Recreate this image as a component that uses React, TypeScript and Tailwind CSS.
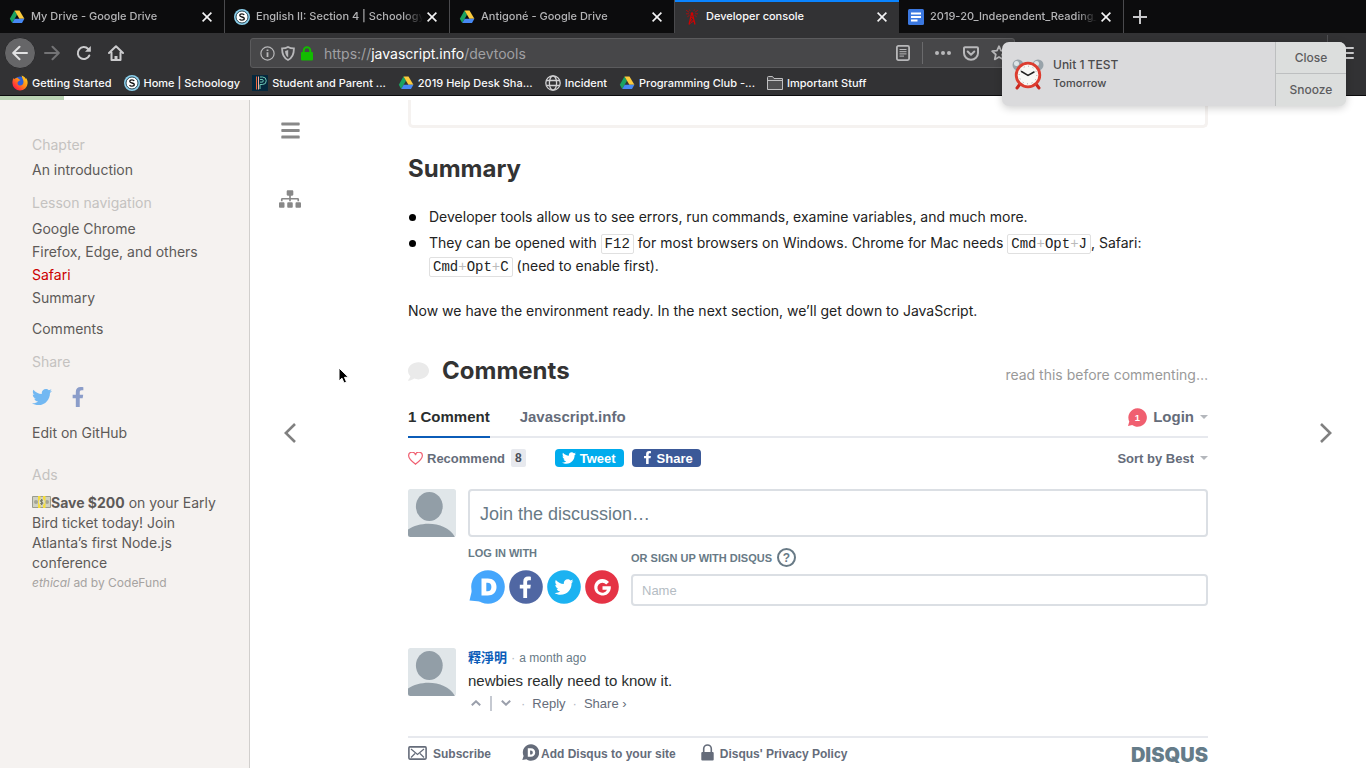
import type { ReactNode } from "react";
import { FaBars, FaComment, FaFacebookF, FaSitemap, FaTwitter } from "react-icons/fa";

function DriveIcon() {
  return (
    <svg width="16" height="16" viewBox="0 0 16 16" className="shrink-0" aria-hidden="true">
      <path d="M5.5 1.5 0.8 9.8 3.2 14 8 5.8Z" fill="#1aa260" />
      <path d="M5.5 1.5h5l4.9 8.3h-5Z" fill="#fccb3c" />
      <path d="M5.7 9.8h9.7L13 14H3.2Z" fill="#4688f4" />
    </svg>
  );
}

function SchoologyIcon() {
  return (
    <svg width="16" height="16" viewBox="0 0 16 16" className="shrink-0" aria-hidden="true">
      <circle cx="8" cy="8" r="8" fill="#8cd0ec" />
      <circle cx="8" cy="8" r="6" fill="#fff" stroke="#16323f" strokeWidth=".9" />
      <path d="M10.200 6.100C9.800 5.200 9 4.800 8 4.800c-1.300 0-2.200.600-2.200 1.600 0 2.200 4.500 1 4.500 3.200 0 1.100-1 1.600-2.300 1.600-1.100 0-2-.400-2.400-1.300" fill="none" stroke="#111" strokeWidth="1.300" />
    </svg>
  );
}

function TowerIcon() {
  return (
    <svg width="14" height="16" viewBox="0 0 14 16" className="shrink-0" fill="none" stroke="#d40000" aria-hidden="true">
      <path d="M6.500 5 4 15.500M7.500 5 10 15.500" strokeWidth="1.200" />
      <path d="M5.600 8.500h2.800L5 12h4M4.200 15 9 12" strokeWidth=".8" />
      <circle cx="7" cy="4.500" r="1.300" fill="#d40000" stroke="none" />
      <path d="M4.200 3.300 1.200 1.300M4 4.800H1M9.800 3.300l3-2M10 4.800h3M5.200 2 4.300.500M8.800 2l.9-1.500M4.500 6.300 2.300 7.800M9.500 6.300l2.200 1.500" strokeWidth=".7" />
    </svg>
  );
}

function DocsIcon() {
  return (
    <svg width="16" height="16" viewBox="0 0 16 16" className="shrink-0" aria-hidden="true">
      <rect width="16" height="16" rx="1.500" fill="#3b78e0" />
      <path d="M3 4.500h10M3 8h10M3 11.500h6.500" stroke="#fff" strokeWidth="1.800" />
    </svg>
  );
}

function FirefoxIcon() {
  return (
    <svg width="16" height="16" viewBox="0 0 16 16" className="shrink-0" aria-hidden="true">
      <defs>
        <linearGradient id="fox" x1="1" y1="0" x2="0" y2="1">
          <stop offset="0" stopColor="#ffe226" />
          <stop offset=".45" stopColor="#ff8a16" />
          <stop offset=".8" stopColor="#ff2a3d" />
          <stop offset="1" stopColor="#e31587" />
        </linearGradient>
      </defs>
      <circle cx="8" cy="7.500" r="6" fill="#2b5fd9" />
      <path d="M1.400 3.200 2.800 4c.7-.9 1.800-1.300 2.800-1.200L7 4.200l1.400.8-1.800 1.200C5 7 5.200 10 7.600 10.400c2.200.4 4-1.200 3.900-3.600C11.400 4.600 10 3.400 9.600.600c2.500 1 3.600 2 4 3.200l.7-.6c1.200 2 1.500 3.800 1.300 5.200A7.600 7.600 0 0 1 8 15.500 7.600 7.600 0 0 1 .4 8c0-1.800.3-3.500 1-4.800Z" fill="url(#fox)" />
    </svg>
  );
}

function PowerSchoolIcon() {
  return (
    <svg width="16" height="16" viewBox="0 0 16 16" className="shrink-0" fill="none" aria-hidden="true">
      <rect width="16" height="16" fill="#06283d" />
      <path d="M4.500 1.500v13" stroke="#f0653a" />
      <path d="M6.500 1.500v13" stroke="#f5b0a0" />
      <path d="M8 2h2.500a3.500 3.500 0 0 1 0 7.500H8V14M8 4.500h2a1.300 1.300 0 0 1 0 2.600H8" stroke="#6cc7b4" />
    </svg>
  );
}

function GlobeIcon() {
  return (
    <svg width="16" height="16" viewBox="0 0 16 16" className="shrink-0" fill="none" stroke="#d0d0d2" strokeWidth="1.300" aria-hidden="true">
      <circle cx="8" cy="8" r="7.200" />
      <ellipse cx="8" cy="8" rx="3.600" ry="7.200" />
      <path d="M1.500 5.500h13M1.500 10.500h13" />
    </svg>
  );
}

function FolderIcon() {
  return (
    <svg width="16" height="14" viewBox="0 0 16 14" className="shrink-0" fill="#4f4f51" stroke="#c0c0c2" aria-hidden="true">
      <path d="M.5 13.500V1.500a1 1 0 0 1 1-1h4l1.500 2h8.500v11ZM.5 4.500h15" />
    </svg>
  );
}

function CloseGlyph() {
  return (
    <svg width="10" height="10" viewBox="0 0 10 10" stroke="#f4f4f5" strokeWidth="1.600" aria-hidden="true">
      <path d="m.6.600 8.800 8.800M9.400.600.600 9.400" />
    </svg>
  );
}

type TabProps = { icon: ReactNode; title: string; active?: boolean };

function BrowserTab({ icon, title, active = false }: TabProps) {
  return (
    <div
      className={
        active
          ? "flex h-full max-w-[224px] flex-1 items-center border-t-2 border-[#0a84ff] bg-[#323234] pr-3 pb-[2px] pl-[10px] text-[#f9f9fa]"
          : "flex h-full max-w-[225px] flex-1 items-center border-r border-[#4a4a4d] pr-3 pl-[9px] text-[#b4b4b6]"
      }
    >
      {icon}
      <span className={active ? "ml-[7px] min-w-0 flex-1 overflow-hidden whitespace-nowrap" : "ml-[6px] min-w-0 flex-1 overflow-hidden whitespace-nowrap [mask-image:linear-gradient(to_right,black_88%,transparent)]"}>
        {title}
      </span>
      <button type="button" aria-label={`Close ${title}`} className="ml-1">
        <CloseGlyph />
      </button>
    </div>
  );
}

function Bookmark({ icon, label }: { icon: ReactNode; label: string }) {
  return (
    <a href="#" className="flex items-center gap-1 whitespace-nowrap">
      {icon}
      {label}
    </a>
  );
}

function BrowserChrome() {
  return (
    <header className="border-b border-[#0b0b0d] bg-[#323234] font-['Inter',sans-serif]">
      <div className="flex h-[33px] bg-[#0c0c0d] text-[11px] font-medium">
        <BrowserTab icon={<DriveIcon />} title="My Drive - Google Drive" />
        <BrowserTab icon={<SchoologyIcon />} title="English II: Section 4 | Schoology" />
        <BrowserTab icon={<DriveIcon />} title="Antigoné - Google Drive" />
        <BrowserTab icon={<TowerIcon />} title="Developer console" active />
        <BrowserTab icon={<DocsIcon />} title="2019-20_Independent_Reading_" />
        <button type="button" aria-label="New tab" className="flex w-8 items-center justify-center">
          <svg width="14" height="14" viewBox="0 0 14 14" stroke="#c8c8ca" strokeWidth="2" aria-hidden="true">
            <path d="M7 0v14M0 7h14" />
          </svg>
        </button>
      </div>
      <div className="flex h-10 items-center pl-1">
        <button type="button" aria-label="Back" className="flex size-8 items-center justify-center rounded-full border border-[#2a2a2c] bg-[#666668]">
          <svg width="16" height="16" viewBox="0 0 16 16" fill="none" stroke="#e2e2e3" strokeWidth="2" strokeLinecap="round" strokeLinejoin="round" aria-hidden="true">
            <path d="M15 8H1.500M7.500 1.800 1.200 8l6.300 6.200" />
          </svg>
        </button>
        <button type="button" aria-label="Forward" className="flex size-8 items-center justify-center">
          <svg width="16" height="16" viewBox="0 0 16 16" fill="none" stroke="#737375" strokeWidth="2" strokeLinecap="round" strokeLinejoin="round" aria-hidden="true">
            <path d="M1 8h13.500M8.500 1.800 14.800 8l-6.300 6.200" />
          </svg>
        </button>
        <button type="button" aria-label="Reload" className="flex size-8 items-center justify-center">
          <svg width="16" height="16" viewBox="0 0 16 16" fill="none" stroke="#cbcbcd" strokeWidth="2" strokeLinecap="round" aria-hidden="true">
            <path d="M13.300 10.500A6 6 0 1 1 12.200 4" />
            <path d="M14.800 1v5.800H9Z" fill="#cbcbcd" stroke="none" />
          </svg>
        </button>
        <button type="button" aria-label="Home" className="flex size-8 items-center justify-center">
          <svg width="16" height="16" viewBox="0 0 16 16" fill="none" stroke="#cbcbcd" strokeWidth="2" strokeLinecap="round" strokeLinejoin="round" aria-hidden="true">
            <path d="M1 8 8 1.200 15 8M3.500 7.500V15h9V7.500" />
            <path d="M8 15v-4" strokeLinecap="butt" strokeWidth="3" />
          </svg>
        </button>
        <div className="ml-[118px] flex h-[30px] min-w-0 flex-1 items-center rounded-[3px] border border-[#5b5b5d] bg-[#474749] pr-[7px] pl-[9px]">
          <div className="flex items-center gap-[6px]">
            <svg width="15" height="15" viewBox="0 0 15 15" fill="none" stroke="#b8b8ba" strokeWidth="1.200" aria-hidden="true">
              <circle cx="7.500" cy="7.500" r="6.600" />
              <path d="M7.500 6.300V11M7.500 3.400v1.700" strokeWidth="1.800" />
            </svg>
            <svg width="14" height="15" viewBox="0 0 14 15" fill="none" stroke="#b8b8ba" strokeWidth="1.800" aria-hidden="true">
              <path d="M7 .9C5.200 2 3.300 2.400 1.100 2.400 1 8 2.300 12 7 14c4.700-2 6-6 5.900-11.600C10.700 2.400 8.800 2 7 .9Z" />
              <path d="M7.200 4v7.300C4.800 9.800 4.200 7.500 4.100 4.900 5.200 4.800 6.200 4.500 7.200 4Z" fill="#b8b8ba" stroke="none" />
            </svg>
            <svg width="12" height="15" viewBox="0 0 12 15" aria-hidden="true">
              <rect y="6" width="12" height="8.500" rx="1" fill="#12bc00" />
              <path d="M2.700 7V4.500a3.300 3.300 0 0 1 6.600 0V7" fill="none" stroke="#12bc00" strokeWidth="2" />
            </svg>
          </div>
          <p className="ml-[11px] flex-1 truncate text-[14px] text-[#a0a0a3]">
            https://<span className="text-white">javascript.info</span>/devtools
          </p>
          <div className="flex items-center text-[#b8b8ba]">
            <svg width="14" height="16" viewBox="0 0 14 16" fill="none" stroke="currentColor" strokeWidth="1.800" aria-hidden="true">
              <rect x=".9" y=".9" width="12.200" height="14.200" rx="1.500" />
              <path d="M3.500 4.500h7M3.500 6.700h7M3.500 8.900h7M3.500 11.100h4.500" strokeWidth="1" />
            </svg>
            <span className="mx-3 h-[22px] w-px bg-[#6a6a6c]" />
            <svg width="16" height="4" viewBox="0 0 16 4" fill="currentColor" aria-hidden="true">
              <circle cx="2" cy="2" r="2" />
              <circle cx="8" cy="2" r="2" />
              <circle cx="14" cy="2" r="2" />
            </svg>
            <svg width="16" height="15" viewBox="0 0 16 15" fill="none" stroke="currentColor" strokeWidth="2" className="ml-3" aria-hidden="true">
              <path d="M2 1.200h12a1 1 0 0 1 1 1V7a7 6.800 0 0 1-14 0V2.200a1 1 0 0 1 1-1Z" />
              <path d="m4.700 5.500 3.300 3.200 3.300-3.200" strokeLinecap="round" strokeLinejoin="round" />
            </svg>
            <svg width="16" height="16" viewBox="0 0 16 16" fill="none" stroke="currentColor" strokeWidth="1.700" strokeLinejoin="round" className="ml-3" aria-hidden="true">
              <path d="m8 1.200 2 4.500 4.900.5-3.700 3.300 1.100 4.900L8 11.900l-4.300 2.500 1.100-4.900L1.100 6.200 6 5.700Z" />
            </svg>
          </div>
        </div>
        <div className="flex h-full w-[351px] items-center justify-end pr-3">
          <span className="mb-1 h-8 w-px bg-[#4f4f52]" />
          <button type="button" aria-label="Menu" className="ml-3">
            <svg width="14" height="14" viewBox="0 0 14 14" stroke="#cbcbcd" strokeWidth="2" strokeLinecap="round" aria-hidden="true">
              <path d="M1 2h12M1 7h12M1 12h12" />
            </svg>
          </button>
        </div>
      </div>
      <nav aria-label="Bookmarks" className="flex h-[22px] items-center gap-3 pb-[2px] pl-3 text-[11px] font-medium text-[#f9f9fa]">
        <Bookmark icon={<FirefoxIcon />} label="Getting Started" />
        <Bookmark icon={<SchoologyIcon />} label="Home | Schoology" />
        <Bookmark icon={<PowerSchoolIcon />} label="Student and Parent ..." />
        <Bookmark icon={<DriveIcon />} label="2019 Help Desk Sha..." />
        <Bookmark icon={<GlobeIcon />} label="Incident" />
        <Bookmark icon={<DriveIcon />} label="Programming Club -..." />
        <Bookmark icon={<FolderIcon />} label="Important Stuff" />
      </nav>
    </header>
  );
}

function MoneyIcon() {
  return (
    <svg width="19" height="12" viewBox="0 0 19 12" className="inline-block align-baseline" aria-hidden="true">
      <rect width="19" height="12" rx="1" fill="#9a9c8f" />
      <rect x="1" y="1" width="17" height="10" fill="#cfd1c4" />
      <circle cx="4" cy="6" r="2" fill="#a3a596" />
      <circle cx="15" cy="6" r="2" fill="#a3a596" />
      <rect x="6" width="2.500" height="12" fill="#f4dc3e" />
      <rect x="11" width="2.500" height="12" fill="#f4dc3e" />
      <circle cx="9.700" cy="6" r="3" fill="#dfe0ca" />
      <path d="M11 4.500c-1-.9-2.700-.6-2.700.4 0 1.400 2.700.8 2.700 2.200 0 1.100-1.900 1.300-2.900.3M9.700 3v6" fill="none" stroke="#5b5e4d" strokeWidth=".8" />
    </svg>
  );
}

function Sidebar() {
  return (
    <aside className="w-[250px] shrink-0 border-r border-[#d1cfcd] bg-[#f5f2f0] px-8 pt-[35px] text-[14px] leading-5 text-[#5d5a58]">
      <h4 className="text-[#c4c2c0]">Chapter</h4>
      <a href="#" className="mt-[5px] block">An introduction</a>
      <h4 className="mt-[13px] text-[#c4c2c0]">Lesson navigation</h4>
      <ul className="mt-1 leading-[23px] whitespace-nowrap">
        <li><a href="#">Google Chrome</a></li>
        <li><a href="#">Firefox, Edge, and others</a></li>
        <li><a href="#" className="text-[#c00]">Safari</a></li>
        <li><a href="#">Summary</a></li>
      </ul>
      <a href="#" className="mt-[10px] block">Comments</a>
      <h4 className="mt-[13px] text-[#c4c2c0]">Share</h4>
      <div className="mt-4 flex h-[18px] items-center gap-4">
        <a href="#" aria-label="Share on Twitter"><FaTwitter size={20} color="#72b8f2" /></a>
        <a href="#" aria-label="Share on Facebook"><FaFacebookF size={20} color="#8b9dc9" /></a>
      </div>
      <a href="#" className="mt-[17px] block">Edit on GitHub</a>
      <h4 className="mt-[22px] text-[#c4c2c0]">Ads</h4>
      <a href="#" className="mt-2 block whitespace-nowrap">
        <MoneyIcon /><strong className="font-bold">Save $200</strong> on your Early
        <br />Bird ticket today! Join
        <br />Atlanta’s first Node.js
        <br />conference
      </a>
      <a href="#" className="block text-[12px] text-[#a5a3a1]"><em>ethical</em> ad by CodeFund</a>
    </aside>
  );
}

function Keys({ keys }: { keys: string[] }) {
  return (
    <kbd className="rounded-[2px] border border-[#e0e0e0] px-[3px] py-px font-['Liberation_Mono',monospace] text-[14px] leading-4 whitespace-nowrap">
      {keys.map((key, i) => (
        <span key={key}>
          {i > 0 && <span className="text-[#bbb]">+</span>}
          {key}
        </span>
      ))}
    </kbd>
  );
}

function Avatar({ id }: { id: string }) {
  return (
    <svg width="48" height="48" viewBox="0 0 48 48" className="shrink-0" role="img" aria-label="Avatar">
      <clipPath id={id}><rect width="48" height="48" rx="2.500" /></clipPath>
      <g clipPath={`url(#${id})`}>
        <rect width="48" height="48" fill="#e0e6e9" />
        <g fill="#929ea7">
          <ellipse cx="21.300" cy="17.500" rx="13.400" ry="14.500" />
          <path d="M0 40.500C13 31.500 38 32 47 48H0Z" />
        </g>
      </g>
    </svg>
  );
}

function Caret() {
  return (
    <svg width="8" height="4" viewBox="0 0 8 4" fill="#b4b7bc" className="shrink-0" aria-hidden="true">
      <path d="M0 0h8L4 4Z" />
    </svg>
  );
}

function LoginCircle({ label, fill, children }: { label: string; fill: string; children: ReactNode }) {
  return (
    <button type="button" aria-label={label} className="size-[34px]">
      <svg width="34" height="34" viewBox="0 0 34 34" overflow="visible" aria-hidden="true">
        <circle cx="17" cy="17" r="16.800" fill={fill} />
        {children}
      </svg>
    </button>
  );
}

function Disqus() {
  return (
    <section aria-label="Discussion" className="font-['Liberation_Sans',sans-serif] text-[#656c7a]">
      <div className="flex h-[51px] items-end justify-between border-b-2 border-[#e7e9ee] text-[15px] leading-5 font-bold">
        <div className="-mb-[2px] flex gap-[30px]">
          <a href="#" className="border-b-2 border-[#0b5cb8] pb-[9px] text-[#2a2e2e]">1 Comment</a>
          <a href="#" className="pb-[11px]">Javascript.info</a>
        </div>
        <button type="button" className="flex items-center pb-[9px]">
          <svg width="19" height="19" viewBox="0 0 19 19" className="mr-[6px]" aria-hidden="true">
            <path d="M9.500.200a9.300 9.300 0 1 1-5.300 16.900L0 17.900l1.300-4.300A9.300 9.300 0 0 1 9.500.200Z" fill="#f05f70" />
            <text x="9.500" y="13" textAnchor="middle" fontSize="9.500" fill="#fff">1</text>
          </svg>
          <span className="mr-[6px]">Login</span>
          <Caret />
        </button>
      </div>

      <div className="mt-[10px] flex h-5 items-center text-[13px] font-bold">
        <button type="button" className="flex items-center">
          <svg width="15" height="13" viewBox="0 0 15 13" fill="none" stroke="#f05f70" strokeWidth="1.200" className="mr-1" aria-hidden="true">
            <path d="M7.500 12.200C4 9.500.7 7 .7 4A3.400 3.400 0 0 1 7.500 3.100 3.400 3.400 0 0 1 14.300 4c0 3-3.300 5.500-6.800 8.200Z" />
          </svg>
          Recommend
          <span className="ml-[6px] rounded-[2px] bg-[#e7e9ee] px-1 text-[12px] leading-[18px] text-[#494e58]">8</span>
        </button>
        <button type="button" className="ml-[29px] flex h-[18px] items-center rounded-[4px] bg-[#00aced] pr-2 pl-[7px] text-white">
          <FaTwitter size={14} className="mr-1 mb-px" />Tweet
        </button>
        <button type="button" className="ml-2 flex h-[18px] items-center rounded-[4px] bg-[#3b5998] pr-2 pl-[9px] text-white">
          <FaFacebookF size={13} className="mr-[3px] mb-px" />Share
        </button>
        <label className="ml-auto flex items-center gap-[6px]">
          <select aria-label="Sort comments" className="appearance-none bg-transparent [field-sizing:content]">
            <option>Sort by Best</option>
          </select>
          <Caret />
        </label>
      </div>

      <div className="mt-[21px] flex gap-3">
        <Avatar id="self-avatar" />
        <div className="min-w-0 flex-1">
          <textarea
            aria-label="Join the discussion"
            placeholder="Join the discussion…"
            rows={1}
            className="block h-12 w-full resize-none rounded-[4px] border-2 border-[#dbdfe4] bg-white px-[10px] pt-[11px] pb-[9px] text-[18px] leading-6 placeholder:text-[#687a86]"
          />
          <div className="flex text-[11px] leading-4 font-bold text-[#687a86]">
            <div className="w-[163px] pt-2">
              <p>LOG IN WITH</p>
              <div className="mt-[9px] flex gap-1 pl-[3px]">
                <LoginCircle label="Log in with Disqus" fill="#45a6fc">
                  <path d="M1 20-1.500 30.500 9 31.500Z" fill="#45a6fc" />
                  <path fillRule="evenodd" d="M10.500 8.500h6.300c5.300 0 8.700 3.100 8.700 8.500s-3.500 8.500-8.800 8.500h-6.200Zm4.800 4.300v8.400h1.300c2.400 0 3.800-1.400 3.800-4.200s-1.400-4.200-3.800-4.200Z" fill="#fff" />
                </LoginCircle>
                <LoginCircle label="Log in with Facebook" fill="#5067a3">
                  <path d="M14.300 28V18.600h-3.500v-3.900h3.500v-3.300c0-3.300 2-4.800 4.700-4.800 1.400 0 2.500.100 2.900.2v3.500h-2c-1.500 0-1.800.8-1.800 1.900v2.500h3.700l-.5 3.900h-3.200V28Z" fill="#fff" />
                </LoginCircle>
                <LoginCircle label="Log in with Twitter" fill="#1cb2f1">
                  <g transform="translate(7.500 7.500)"><FaTwitter size={19} color="#fff" /></g>
                </LoginCircle>
                <LoginCircle label="Log in with Google" fill="#e53345">
                  <path d="M24 12a8.300 8.300 0 1 0 1.800 4.300h-8.300v3.500h4.500a5 5 0 1 1-.8-5.200Z" fill="#fff" />
                </LoginCircle>
              </div>
            </div>
            <div className="min-w-0 flex-1 pt-[11px]">
              <div className="flex h-[19px] items-center">
                <label htmlFor="signup-name">OR SIGN UP WITH DISQUS</label>
                <button type="button" aria-label="Help" className="ml-[5px] flex size-[19px] items-center justify-center rounded-full border-2 border-[#687a86] text-[12px]">?</button>
              </div>
              <input
                id="signup-name"
                type="text"
                placeholder="Name"
                className="mt-[7px] block h-8 w-full rounded-[4px] border-2 border-[#dbdfe4] px-[9px] text-[13px] font-normal placeholder:text-[#b4bcc3]"
              />
            </div>
          </div>
        </div>
      </div>

      <article className="mt-[42px] flex gap-3">
        <Avatar id="author-avatar" />
        <div className="text-[13px]">
          <p className="leading-[18px]">
            <a href="#" className="font-['Noto_Sans_CJK_TC',sans-serif] font-bold text-[#0b5cb8]">釋淨明</a>
            <span className="mx-1 text-[#b4bcc3]">·</span>
            <span className="text-[12px] text-[#687a86]">a month ago</span>
          </p>
          <p className="mt-1 text-[15px] leading-5 text-[#2a2e2e]">newbies really need to know it.</p>
          <div className="mt-[3px] flex h-[18px] items-center">
            <button type="button" aria-label="Upvote" className="ml-[3px]">
              <svg width="10" height="6" viewBox="0 0 10 6" fill="none" stroke="#9a9fab" strokeWidth="2" aria-hidden="true"><path d="m.8 5.300 4.200-4 4.200 4" /></svg>
            </button>
            <span className="mx-[9px] h-[15px] w-[2px] bg-[#c5c9d1]" />
            <button type="button" aria-label="Downvote">
              <svg width="10" height="6" viewBox="0 0 10 6" fill="none" stroke="#9a9fab" strokeWidth="2" aria-hidden="true"><path d="m.8.700 4.200 4 4.200-4" /></svg>
            </button>
            <span className="mr-[7px] ml-[10px] text-[#b4b9c3]">·</span>
            <button type="button">Reply</button>
            <span className="mx-[7px] text-[#b4b9c3]">·</span>
            <button type="button">Share ›</button>
          </div>
        </div>
      </article>

      <footer className="mt-6 flex h-[33px] items-center border-t-2 border-[#e7e9ee] pt-[2px] text-[12px] font-bold">
        <a href="#" className="flex items-center">
          <svg width="19" height="14" viewBox="0 0 19 14" fill="none" stroke="#656c7a" className="mr-[6px] mb-1" aria-hidden="true">
            <rect x=".9" y=".9" width="17.200" height="12.200" rx="1" strokeWidth="1.600" />
            <path d="m3 3 6.500 5.500L16 3M3 11.500l4-4M16 11.500l-4-4" strokeWidth="1.200" />
          </svg>
          Subscribe
        </a>
        <a href="#" className="ml-[31px] flex items-center">
          <svg width="17" height="17" viewBox="0 0 17 17" className="mr-[2px] mb-1" aria-hidden="true">
            <path d="M9 .3a8.200 8.200 0 1 1-4.600 15L.3 16l1.300-4A8.200 8.200 0 0 1 9 .3Z" fill="#656c7a" />
            <path fillRule="evenodd" d="M5.800 4.300h3.100c2.700 0 4.300 1.600 4.300 4.200s-1.700 4.200-4.400 4.200h-3Zm2.300 2.100v4.200h.7c1.200 0 2-.7 2-2.100s-.8-2.100-2-2.100Z" fill="#fff" />
          </svg>
          Add Disqus to your site
        </a>
        <a href="#" className="ml-[25px] flex items-center">
          <svg width="13" height="17" viewBox="0 0 13 17" className="mr-[6px] mb-1" aria-hidden="true">
            <rect x=".3" y="8" width="12.400" height="8.500" rx="1" fill="#656c7a" />
            <path d="M2.700 8V4.800a3.800 3.800 0 0 1 7.600 0V8" fill="none" stroke="#656c7a" strokeWidth="1.600" />
          </svg>
          Disqus' Privacy Policy
        </a>
        <a href="#" className="ml-auto font-['Inter',sans-serif] text-[20px] leading-none font-black text-[#657c89]">DISQUS</a>
      </footer>
    </section>
  );
}

function Article() {
  return (
    <main className="mx-auto min-w-0 max-w-[800px] flex-1 text-[14px] leading-[23px] text-[#222]">
      <div className="h-7 rounded-b-[5px] border-[3px] border-t-0 border-[#f5f2f0]" />
      <h2 className="mt-[25px] text-[24px] leading-8 font-bold text-[#333]">Summary</h2>
      <ul className="mt-5 flex flex-col gap-[3px]">
        <li className="flex gap-[13px]">
          <span className="mt-[9px] ml-px size-[7px] shrink-0 rounded-full bg-black" />
          <span>Developer tools allow us to see errors, run commands, examine variables, and much more.</span>
        </li>
        <li className="flex gap-[13px]">
          <span className="mt-[9px] ml-px size-[7px] shrink-0 rounded-full bg-black" />
          <span>
            They can be opened with <Keys keys={["F12"]} /> for most browsers on Windows. Chrome for Mac needs{" "}
            <Keys keys={["Cmd", "Opt", "J"]} />, Safari: <br />
            <Keys keys={["Cmd", "Opt", "C"]} /> (need to enable first).
          </span>
        </li>
      </ul>
      <p className="mt-[22px]">Now we have the environment ready. In the next section, we’ll get down to JavaScript.</p>
      <div className="mt-[33px] flex h-8 items-center">
        <FaComment size={21} color="#eaeaea" />
        <h2 className="ml-[13px] text-[24px] leading-8 font-bold text-[#333]">Comments</h2>
        <a href="#" className="mt-[6px] ml-auto text-[#999]">read this before commenting…</a>
      </div>
      <Disqus />
    </main>
  );
}

function Reminder() {
  return (
    <div role="alert" className="absolute top-[42px] right-5 flex h-16 w-[344px] overflow-hidden rounded-[7px] bg-[#dadadc] font-['Inter',sans-serif] text-[#4b4b4d] shadow-[0_2px_8px_rgba(0,0,0,0.2)]">
      <div className="flex flex-1 items-center">
        <svg width="34" height="32" viewBox="0 0 34 32" className="ml-[9px]" aria-hidden="true">
          <path d="m9 26-3 4M25 26l3 4" stroke="#c9281f" strokeWidth="3" strokeLinecap="round" />
          <circle cx="7" cy="7" r="5.500" fill="#98a3aa" />
          <circle cx="5.500" cy="5.500" r="2.500" fill="#dce3e6" />
          <circle cx="27" cy="7" r="5.500" fill="#98a3aa" />
          <circle cx="25.500" cy="5.500" r="2.500" fill="#dce3e6" />
          <circle cx="17" cy="17" r="11.800" fill="#f8f8f5" stroke="#dc3d30" strokeWidth="2.800" />
          <circle cx="17" cy="17" r="8.800" fill="none" stroke="#8a8a8a" strokeWidth="1" strokeDasharray=".8 3.808" />
          <path d="m10.500 13.500 6.500 3.800 6-3.300" fill="none" stroke="#222" strokeWidth="1.500" strokeLinecap="round" />
        </svg>
        <div className="ml-2 leading-[18px]">
          <p className="text-[12px] font-medium">Unit 1 TEST</p>
          <p className="text-[11px] font-medium">Tomorrow</p>
        </div>
      </div>
      <div className="flex w-[71px] flex-col border-l border-[#bdbfc0] bg-[#dcdedd] text-[12px] text-[#5c5c5e]">
        <button type="button" className="h-8 border-b border-[#bdbfc0] font-medium">Close</button>
        <button type="button" className="h-8 font-medium">Snooze</button>
      </div>
    </div>
  );
}

export default function App() {
  return (
    <div className="relative flex min-h-screen flex-col overflow-hidden bg-white font-['Inter',sans-serif]">
      <BrowserChrome />
      <div className="h-1"><div className="h-full w-16 bg-[#b9d2b3]" /></div>
      <div className="flex flex-1">
        <Sidebar />
        <div className="flex min-w-0 flex-1">
          <nav aria-label="Previous lesson and site map" className="flex w-20 shrink-0 flex-col items-center pt-5 text-[#888]">
            <button type="button" aria-label="Show sidebar"><FaBars size={21} /></button>
            <a href="#" aria-label="Tutorial map" className="mt-[47px]"><FaSitemap size={22} /></a>
            <a href="#" aria-label="Previous" className="mt-[213px]">
              <svg width="12" height="20" viewBox="0 0 12 20" fill="none" stroke="#808080" strokeWidth="2.600" aria-hidden="true"><path d="M11 1 1.800 10l9.200 9" /></svg>
            </a>
          </nav>
          <Article />
          <nav aria-label="Next lesson" className="flex w-20 shrink-0 flex-col items-center pt-[323px]">
            <a href="#" aria-label="Next">
              <svg width="12" height="20" viewBox="0 0 12 20" fill="none" stroke="#808080" strokeWidth="2.600" aria-hidden="true"><path d="m1 1 9.200 9L1 19" /></svg>
            </a>
          </nav>
        </div>
      </div>
      <Reminder />
      <svg width="12" height="18" viewBox="0 0 12 18" className="absolute top-[367px] left-[338px]" aria-hidden="true">
        <path d="M1 1v13l3-2.800 2 4.800 2.500-1-2-4.700h4Z" fill="#000" stroke="#fff" strokeWidth="1" />
      </svg>
    </div>
  );
}
